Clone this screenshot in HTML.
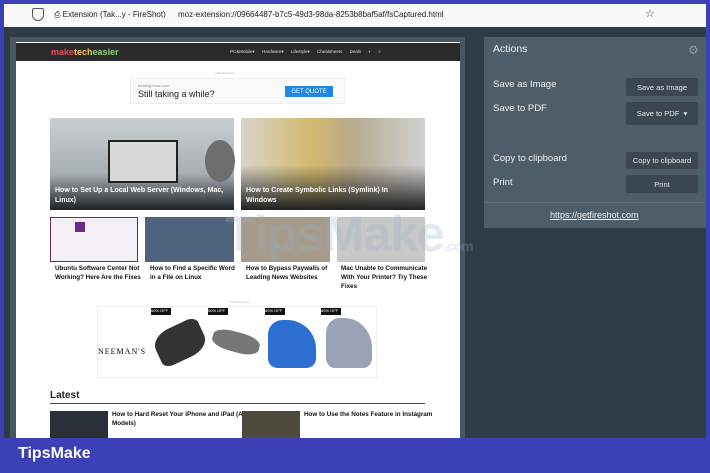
<!DOCTYPE html>
<html><head><style>
*{margin:0;padding:0;box-sizing:border-box}
body{width:710px;height:473px;background:#3b40b7;position:relative;overflow:hidden;font-family:"Liberation Sans",sans-serif}
.a{position:absolute}
.btn{position:absolute;left:626px;width:72px;background:#3a4651;color:#e6e9ec;font-size:7.5px;display:flex;align-items:center;justify-content:center;border-radius:2px}
.lbl{position:absolute;left:493px;color:#eef1f3;font-size:9.5px}
.t{font-size:6.3px;font-weight:bold;color:#111;line-height:9px}
.ct{position:absolute;color:#fff;font-size:7px;font-weight:bold;line-height:10px}
</style></head><body>
<div class="a" style="left:4px;top:4px;width:702px;height:23px;background:#f9f9fb"></div>
<div class="a" style="left:32px;top:8px;width:12px;height:13px;border:1.3px solid #555;border-radius:2px 2px 6px 6px"></div>
<div class="a" style="left:54px;top:10px;font-size:8px;color:#222">⎙ Extension (Tak...y - FireShot)</div>
<div class="a" style="left:178px;top:10px;font-size:8px;color:#222">moz-extension://09664487-b7c5-49d3-98da-8253b8baf5af/fsCaptured.html</div>
<div class="a" style="left:645px;top:7px;font-size:11px;color:#444">☆</div>
<div class="a" style="left:4px;top:27px;width:702px;height:411px;background:#2e3c48"></div>
<div class="a" style="left:10px;top:37px;width:455px;height:401px;background:#465764"></div>
<div class="a" style="left:16px;top:42px;width:444px;height:396px;background:#fff"></div>
<div class="a" style="left:16px;top:43px;width:444px;height:18px;background:#2a2a2a"></div>
<div class="a" style="left:51px;top:47px;font-size:9px;font-weight:bold;color:#e84c5b">make<span style="color:#f2c94c">tech</span><span style="color:#8dd07a">easier</span></div>
<div class="a" style="left:230px;top:49px;font-size:4.5px;color:#ddd;word-spacing:6px">PC&amp;Mobile▾ Hardware▾ Lifestyle▾ Cheatsheets Deals ◐ ⌕</div>
<div class="a" style="left:215px;top:71px;font-size:3px;color:#aaa">Advertisement</div>
<div class="a" style="left:130px;top:78px;width:215px;height:26px;background:#fafafa;border:1px solid #eee"></div>
<div class="a" style="left:138px;top:83px;font-size:4px;color:#888">heating-hvac.com</div>
<div class="a" style="left:138px;top:89px;font-size:9px;color:#222">Still taking a while?</div>
<div class="a" style="left:285px;top:86px;width:48px;height:11px;background:#1e88e5;color:#fff;font-size:6px;display:flex;align-items:center;justify-content:center">GET QUOTE</div>
<div class="a" style="left:50px;top:118px;width:184px;height:92px;background:linear-gradient(#c9cfd1,#a9b0b2 60%,#1e2226)"></div>
<div class="a" style="left:108px;top:140px;width:70px;height:43px;background:#d8d8d6;border:2px solid #222"></div>
<div class="a" style="left:205px;top:140px;width:30px;height:42px;background:#6d6f6e;border-radius:50%"></div>
<div class="ct" style="left:55px;top:186px">How to Set Up a Local Web Server (Windows, Mac,<br>Linux)</div>
<div class="a" style="left:241px;top:118px;width:184px;height:92px;background:linear-gradient(90deg,#d9d4c9,#d2b86a 40%,#b7a98e 60%,#cfd2d1);"></div>
<div class="a" style="left:241px;top:165px;width:184px;height:45px;background:linear-gradient(transparent,#1e2022)"></div>
<div class="ct" style="left:246px;top:186px">How to Create Symbolic Links (Symlink) In<br>Windows</div>
<div class="a" style="left:50px;top:217px;width:88px;height:45px;background:#f3f1f5;border:1px solid #7a2a4a"></div>
<div class="a" style="left:75px;top:222px;width:10px;height:10px;background:#6a2a8a"></div>
<div class="a" style="left:145px;top:217px;width:89px;height:45px;background:#50637e"></div>
<div class="a" style="left:241px;top:217px;width:89px;height:45px;background:#a69a8a"></div>
<div class="a" style="left:337px;top:217px;width:88px;height:45px;background:#c8c8c6"></div>
<div class="a" style="left:225px;top:205px;font-size:50px;font-weight:bold;color:rgba(150,175,200,0.28);letter-spacing:-1px">TipsMake<span style="font-size:14px">.com</span></div>
<div class="a t" style="left:55px;top:264px">Ubuntu Software Center Not<br>Working? Here Are the Fixes</div>
<div class="a t" style="left:150px;top:264px">How to Find a Specific Word<br>in a File on Linux</div>
<div class="a t" style="left:246px;top:264px">How to Bypass Paywalls of<br>Leading News Websites</div>
<div class="a t" style="left:341px;top:264px">Mac Unable to Communicate<br>With Your Printer? Try These<br>Fixes</div>
<div class="a" style="left:230px;top:300px;font-size:3px;color:#bbb">Advertisement</div>
<div class="a" style="left:97px;top:306px;width:280px;height:72px;background:#fff;border:1px solid #eee"></div>
<div class="a" style="left:98px;top:347px;font-size:8px;font-family:'Liberation Serif',serif;letter-spacing:1px">NEEMAN'S</div>
<div class="a" style="left:155px;top:325px;width:50px;height:35px;background:#333;border-radius:40% 20%;transform:rotate(-25deg)"></div>
<div class="a" style="left:212px;top:332px;width:48px;height:20px;background:#777;border-radius:40%;transform:rotate(15deg)"></div>
<div class="a" style="left:268px;top:320px;width:48px;height:48px;background:#2c6fd0;border-radius:30% 60% 20% 20%"></div>
<div class="a" style="left:326px;top:318px;width:46px;height:50px;background:#9aa3b5;border-radius:30% 60% 20% 20%"></div>
<div class="a" style="left:151px;top:308px;width:20px;height:7px;background:#111;color:#fff;font-size:4px">60% OFF</div>
<div class="a" style="left:208px;top:308px;width:20px;height:7px;background:#111;color:#fff;font-size:4px">50% OFF</div>
<div class="a" style="left:265px;top:308px;width:20px;height:7px;background:#111;color:#fff;font-size:4px">60% OFF</div>
<div class="a" style="left:321px;top:308px;width:20px;height:7px;background:#111;color:#fff;font-size:4px">60% OFF</div>
<div class="a" style="left:50px;top:390px;font-size:10px;font-weight:bold;color:#222">Latest</div>
<div class="a" style="left:50px;top:403px;width:375px;height:1px;background:#444"></div>
<div class="a" style="left:50px;top:411px;width:58px;height:27px;background:#2a3038"></div>
<div class="a t" style="left:112px;top:410px;width:140px">How to Hard Reset Your iPhone and iPad (All<br>Models)</div>
<div class="a" style="left:242px;top:411px;width:58px;height:27px;background:#4e4a3e"></div>
<div class="a t" style="left:304px;top:410px;width:140px">How to Use the Notes Feature in Instagram</div>
<div class="a" style="left:484px;top:37px;width:222px;height:191px;background:#4e5d6a"></div>
<div class="a" style="left:493px;top:43px;color:#f0f2f4;font-size:10.5px">Actions</div>
<div class="a" style="left:688px;top:43px;color:#8f9ba5;font-size:12px">⚙</div>
<div class="lbl" style="top:79px">Save as Image</div>
<div class="lbl" style="top:103px">Save to PDF</div>
<div class="lbl" style="top:153px">Copy to clipboard</div>
<div class="lbl" style="top:177px">Print</div>
<div class="btn" style="top:78px;height:18px">Save as Image</div>
<div class="btn" style="top:102px;height:23px">Save to PDF &nbsp;▾</div>
<div class="btn" style="top:152px;height:17px">Copy to clipboard</div>
<div class="btn" style="top:175px;height:18px">Print</div>
<div class="a" style="left:484px;top:202px;width:222px;height:1px;background:#5d6b77"></div>
<div class="a" style="left:550px;top:210px;color:#f0f2f4;font-size:9px;text-decoration:underline">https://getfireshot.com</div>
<div class="a" style="left:18px;top:445px;color:#fff;font-size:16px;font-weight:bold">TipsMake</div>
</body></html>
